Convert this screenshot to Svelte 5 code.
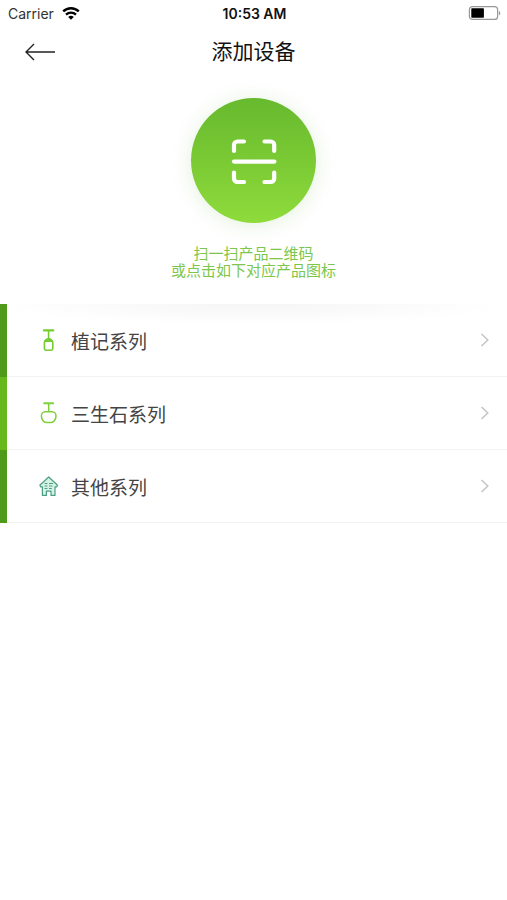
<script>
  const series = [
    { id: 'plant', name: '植记系列' },
    { id: 'stone', name: '三生石系列' },
    { id: 'other', name: '其他系列' },
  ]
</script>

<div class="statusbar">
  <div class="carrier">
    <span>Carrier</span>
    <svg width="18" height="14" viewBox="0 0 18 14" fill="none" stroke="#000" stroke-width="2.4">
      <path d="M1.2 4.4a11.2 11.2 0 0 1 15.6 0" />
      <path d="M4 7.6a7.2 7.2 0 0 1 10 0" />
      <path d="M9 12.8L6.2 10.1a4 4 0 0 1 5.6 0z" fill="#000" stroke="none" />
    </svg>
  </div>
  <div class="time">10:53 AM</div>
  <svg class="battery" width="33" height="15" viewBox="0 0 33 15">
    <rect x="1.4" y="0.6" width="28.2" height="12.8" rx="3" fill="#fff" stroke="#999" stroke-width="1.2" />
    <rect x="3.3" y="2.3" width="12.6" height="9.4" rx="0.6" fill="#000" />
    <path d="M30.9 4.9c1.8 0.5 1.8 3.9 0 4.4z" fill="#999" />
  </svg>
</div>

<header class="navbar">
  <button class="back" aria-label="返回">
    <svg width="32" height="20" viewBox="0 0 32 20" fill="none" stroke="#222" stroke-width="1.4">
      <path d="M10 2L2 10L10 18M2 10H31" />
    </svg>
  </button>
  <h1>添加设备</h1>
</header>

<section class="scan">
  <button class="scan-btn" aria-label="扫一扫">
    <svg width="46" height="46" viewBox="0 0 46 46" fill="none" stroke="#fff" stroke-width="4.2" stroke-linecap="round" stroke-linejoin="round">
      <path d="M3 13V7a3.5 3.5 0 0 1 3.5-3.5H13" />
      <path d="M33.5 3.5h6.2a3.5 3.5 0 0 1 3.5 3.5v6" />
      <path d="M3 34.5v6a3.5 3.5 0 0 0 3.5 3.5H13" />
      <path d="M33.5 44h6.2a3.5 3.5 0 0 0 3.5-3.5v-6" />
      <path d="M3 23.6h40.4" />
    </svg>
  </button>
  <p>扫一扫产品二维码<br />或点击如下对应产品图标</p>
</section>

<ul class="list">
  {#each series as item (item.id)}
    <li>
      <button class="row">
        <svg class="icon" width="20" height="24" viewBox="0 0 20 24" fill="none">
          {#if item.id === 'plant'}
            <g stroke="#76cc33" stroke-width="1.6">
              <path d="M4.4 1.8h10.4v1.2H4.4z" fill="#76cc33" stroke-width="1" stroke-linejoin="round" />
              <path d="M9.6 3v8" />
              <path d="M5.6 13.5c0-4 8-4 8 0z" fill="#76cc33" stroke-width="1" />
              <rect x="5.4" y="12.8" width="8.4" height="9.4" rx="1.6" />
            </g>
          {:else if item.id === 'stone'}
            <g stroke="#7ed03c" stroke-width="1.5">
              <path d="M4.8 1.8h9.8v1H4.8z" fill="#7ed03c" stroke-width="1" stroke-linejoin="round" />
              <path d="M9.7 3v7" />
              <path d="M6.2 10.7h7c2.2 0 3.8 2 3.8 4.2 0 3.8-2.6 6.7-5.4 6.7H7.8c-2.8 0-5.4-2.9-5.4-6.7 0-2.2 1.6-4.2 3.8-4.2z" />
            </g>
          {:else}
            <g stroke="#4c9f84" stroke-width="1.2" stroke-linejoin="round">
              <path d="M9.7 3L.8 11.3l1 1.6h1.6V21.4h4v-4.2H12v4.2h4v-8.5h1.6l1-1.6z" fill="#d5f2e5" />
              <path d="M5.6 9.5h2.8M10 9.5h4M5.6 12h2.8M10 12h3.4M5.6 14.5h2.8M10 14.5h2.8" />
            </g>
          {/if}
        </svg>
        <span class="name">{item.name}</span>
        <svg width="10" height="14" viewBox="0 0 10 14" fill="none" stroke="#c4c4c4" stroke-width="1.5">
          <path d="M1.5 1l6.3 6l-6.3 6" />
        </svg>
      </button>
    </li>
  {/each}
</ul>

<style>
  :global(body) { margin:0; background:#fff; color:#111; font-family:Inter, "Noto Sans CJK SC", sans-serif; }
  button { padding:0; border:0; background:none; color:inherit; font:inherit; cursor:pointer; }
  svg { display:block; flex:none; }

  .statusbar { display:grid; grid-template-columns:1fr auto 1fr; align-items:center; height:27px; padding:0 6px 0 8px; }
  .carrier { display:flex; align-items:center; gap:8px; color:#333; font-size:14px; }
  .time { font-weight:600; font-size:14px; }
  .battery { justify-self:end; }

  .navbar { display:grid; grid-template-columns:1fr auto 1fr; align-items:center; height:50px; padding:0 24px; }
  .back { justify-self:start; }
  .navbar h1 { margin:0; font-size:21px; line-height:28px; font-weight:400; }

  .scan { display:flex; flex-direction:column; align-items:center; padding:21px 0 26px; }
  .scan-btn { display:flex; align-items:center; justify-content:center; width:125px; height:125px; border-radius:50%; background:linear-gradient(#67b92e, #8edb3b); box-shadow:0 2px 20px rgba(100,170,60,.18); }
  .scan p { margin:21px 0 0; color:#7cc64a; font-family:"Noto Sans CJK SC", sans-serif; font-size:15px; line-height:17px; text-align:center; }

  .list { margin:0; padding:0; list-style:none; background:radial-gradient(ellipse 50% 20px at 50% 0, #f5f5f5, #fff); }
  .list li { border-left:7px solid #4f9a18; }
  .list li:nth-child(even) { border-left-color:#67b91b; }
  .row { display:flex; align-items:center; box-sizing:border-box; width:100%; height:73px; padding:0 17px 0 32px; border-bottom:1px solid #f2f2f2; text-align:left; }
  .icon { margin-right:12px; }
  .name { flex:1; color:#444; font-size:19px; }
</style>
